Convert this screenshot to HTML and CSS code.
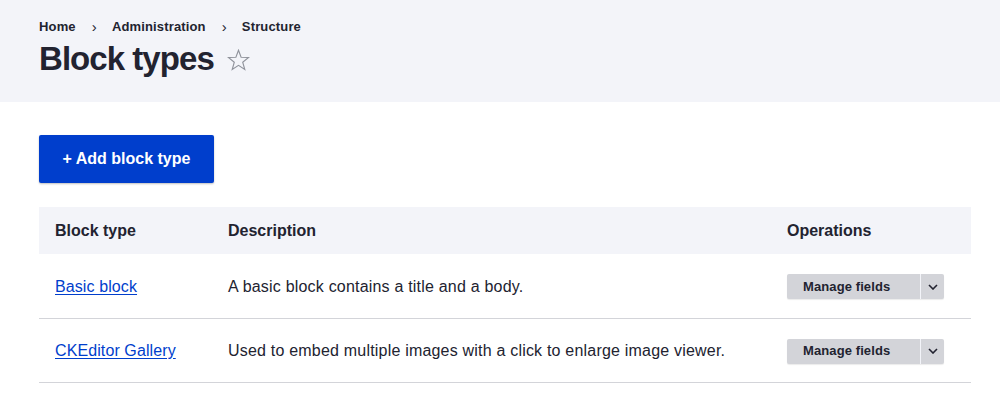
FILE: index.html
```html
<!DOCTYPE html>
<html lang="en">
<head>
<meta charset="utf-8">
<title>Block types</title>
<link rel="stylesheet" href="styles.css">
</head>
<body>
<header class="page-header">
  <nav class="breadcrumb">
    <a href="#">Home</a><span class="sep">›</span><a href="#">Administration</a><span class="sep">›</span><a href="#">Structure</a>
  </nav>
  <div class="title-row">
    <h1 class="page-title">Block types</h1>
    <svg class="star" width="23" height="22" viewBox="0 0 23 22" aria-hidden="true"><path d="M11.5 1.2 L14.1 8.3 L21.6 8.5 L15.7 13.2 L17.8 20.5 L11.5 16.3 L5.2 20.5 L7.3 13.2 L1.4 8.5 L8.9 8.3 Z" fill="none" stroke="#8f929b" stroke-width="1.1" stroke-linejoin="miter"/></svg>
  </div>
</header>
<main class="content">
  <div class="actions">
    <a class="btn-primary" href="#">+ Add block type</a>
  </div>
  <table class="listing">
    <thead>
      <tr>
        <th class="col-name">Block type</th>
        <th class="col-desc">Description</th>
        <th class="col-ops">Operations</th>
      </tr>
    </thead>
    <tbody>
      <tr>
        <td><a class="link" href="#">Basic block</a></td>
        <td class="desc">A basic block contains a title and a body.</td>
        <td>
          <div class="dropbutton">
            <a class="drop-main" href="#">Manage fields</a>
            <span class="drop-toggle"><svg width="10" height="6" viewBox="0 0 10 6"><path d="M1 1 L5 5 L9 1" fill="none" stroke="#222330" stroke-width="1.6"/></svg></span>
          </div>
        </td>
      </tr>
      <tr>
        <td><a class="link" href="#">CKEditor Gallery</a></td>
        <td class="desc">Used to embed multiple images with a click to enlarge image viewer.</td>
        <td>
          <div class="dropbutton">
            <a class="drop-main" href="#">Manage fields</a>
            <span class="drop-toggle"><svg width="10" height="6" viewBox="0 0 10 6"><path d="M1 1 L5 5 L9 1" fill="none" stroke="#222330" stroke-width="1.6"/></svg></span>
          </div>
        </td>
      </tr>
    </tbody>
  </table>
</main>
</body>
</html>
```

FILE: styles.css
```css
* { box-sizing: border-box; }
html, body { margin: 0; padding: 0; background: #fff; }
body {
  font-family: "Liberation Sans", Arial, Helvetica, sans-serif;
  color: #222330;
  font-size: 16px;
  overflow: hidden;
}
.page-header {
  background: #f3f4f9;
  padding: 17px 29px 22px 39px;
  height: 102px;
}
.breadcrumb {
  display: flex;
  align-items: center;
  height: 20px;
  font-size: 13px;
  font-weight: 700;
  line-height: 20px;
  letter-spacing: 0.15px;
}
.breadcrumb a { color: #222330; text-decoration: none; }
.breadcrumb .sep {
  margin: 0 15px 0 16px;
  font-weight: 400;
  font-size: 15px;
}
.title-row {
  display: flex;
  align-items: center;
  margin-top: 2px;
  height: 40px;
}
.page-title {
  margin: 0;
  font-size: 33px;
  line-height: 40px;
  font-weight: 700;
  letter-spacing: -0.95px;
}
.star { margin-left: 13px; margin-top: 2px; }
.content { padding: 33px 29px 0 39px; }
.actions { margin-bottom: 24px; }
.btn-primary {
  display: inline-flex;
  align-items: center;
  justify-content: center;
  height: 48px;
  width: 175px;
  background: #003ecc;
  color: #fff;
  font-weight: 700;
  font-size: 16px;
  text-decoration: none;
  border-radius: 2px;
  box-shadow: 0 1px 2px rgba(0,0,0,0.25);
}
.listing {
  width: 932px;
  border-collapse: collapse;
  table-layout: fixed;
}
.listing th {
  background: #f3f4f9;
  height: 47px;
  text-align: left;
  font-weight: 700;
  padding: 1px 16px 0;
  font-size: 16px;
}
.col-name { width: 173px; }
.col-desc { width: 559px; }
.col-ops { width: 200px; }
.listing td {
  height: 64px;
  padding: 2px 16px 0;
  border-bottom: 1px solid #d3d4d9;
  vertical-align: middle;
  line-height: 20px;
}
.listing td.desc { letter-spacing: 0.2px; }
.link { color: #003ecc; text-decoration: underline; text-underline-offset: 2px; letter-spacing: 0.1px; }
.dropbutton {
  display: flex;
  width: 157px;
  height: 25px;
  background: #d3d4d9;
  border-radius: 2px;
  box-shadow: 0 1px 1px rgba(0,0,0,0.08);
}
.drop-main {
  flex: 1;
  display: flex;
  align-items: center;
  padding-left: 16px;
  font-size: 13px;
  font-weight: 700;
  color: #222330;
  text-decoration: none;
  border-right: 1px solid #f3f4f9;
  letter-spacing: 0.1px;
}
.drop-toggle {
  width: 23px;
  display: flex;
  align-items: center;
  justify-content: center;
}
```
